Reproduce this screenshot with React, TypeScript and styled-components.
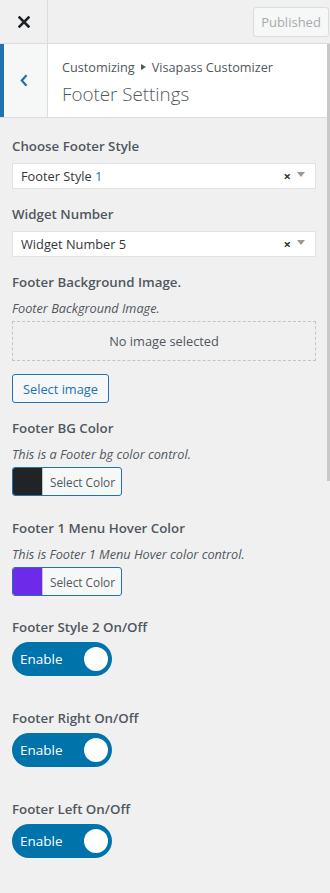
import React from "react";
import styled, { createGlobalStyle } from "styled-components";

const GlobalStyle = createGlobalStyle`
  html, body { margin: 0; padding: 0; background: #f0f0f1; }
  body { font-family: "Open Sans", "Noto Sans", sans-serif; color: #50575e; }
  * { box-sizing: border-box; }
`;

const Panel = styled.div`
  position: relative;
  width: 330px;
  height: 893px;
  overflow: hidden;
  background: #f0f0f1;
`;

const TopBar = styled.header`
  display: flex;
  align-items: center;
  height: 44px;
  border-bottom: 1px solid #dcdcde;
`;

const CloseButton = styled.div`
  width: 48px;
  height: 43px;
  border-right: 1px solid #dcdcde;
  display: flex;
  align-items: center;
  justify-content: center;
`;

const PublishedButton = styled.div`
  margin-left: auto;
  margin-right: 1px;
  width: 76px;
  height: 30px;
  border: 1px solid #dcdcde;
  border-radius: 3px;
  background: #f6f7f7;
  color: #a7aaad;
  font-size: 13px;
  display: flex;
  align-items: center;
  justify-content: center;
`;

const SectionHead = styled.div`
  display: flex;
  height: 74px;
  background: #fff;
  border-bottom: 1px solid #dcdcde;
`;

const BackButton = styled.div`
  width: 48px;
  background: #f6f7f7;
  border-left: 4px solid #2271b1;
  border-right: 1px solid #dcdcde;
  display: flex;
  align-items: center;
  justify-content: center;
  padding-right: 4px;
`;

const TitleBlock = styled.div`
  display: flex;
  flex-direction: column;
  padding: 13px 0 0 14px;
`;

const Breadcrumb = styled.div`
  font-size: 12.7px;
  line-height: 20px;
  color: #50575e;
  display: flex;
  align-items: center;
  gap: 6px;
`;

const Arrow = styled.span`
  display: inline-block;
  width: 0;
  height: 0;
  border-top: 3px solid transparent;
  border-bottom: 3px solid transparent;
  border-left: 5px solid #50575e;
`;

const Title = styled.div`
  font-size: 18.8px;
  font-weight: 300;
  line-height: 28px;
  margin-top: 3px;
  color: #50575e;
`;

const Content = styled.div`
  padding: 16px 14px 0 12px;
`;

const Control = styled.div<{ $gap: number }>`
  margin-bottom: ${(p) => p.$gap}px;
`;

const Label = styled.div`
  font-size: 13.3px;
  font-weight: 600;
  line-height: 24px;
  color: #50575e;
`;

const Description = styled.div`
  font-size: 12.7px;
  font-style: italic;
  line-height: 18px;
  margin: 5px 0 4px;
  color: #50575e;
`;

const Select = styled.div`
  margin-top: 5px;
  height: 26px;
  background: #fff;
  border: 1px solid #e2e2e2;
  display: flex;
  align-items: center;
  padding: 0 10px 0 8px;
  font-size: 12.8px;
  color: #32373c;
`;

const Blue = styled.span`
  color: #2271b1;
`;

const Clear = styled.span`
  margin-left: auto;
  font-size: 13px;
  font-weight: 700;
  color: #333;
  margin-right: 6px;
`;

const Caret = styled.span`
  width: 0;
  height: 0;
  border-left: 4px solid transparent;
  border-right: 4px solid transparent;
  border-top: 5px solid #999;
  margin-bottom: 3px;
`;

const Placeholder = styled.div`
  margin-top: 2px;
  height: 40px;
  border: 1px dashed #c3c4c7;
  display: flex;
  align-items: center;
  justify-content: center;
  font-size: 12.8px;
  color: #50575e;
`;

const SecondaryButton = styled.div`
  margin-top: 13px;
  display: inline-flex;
  align-items: center;
  height: 29px;
  padding: 0 10px;
  border: 1px solid #2271b1;
  border-radius: 3px;
  background: #f6f7f7;
  color: #2271b1;
  font-size: 12.8px;
`;

const ColorButton = styled.div`
  display: inline-flex;
  height: 29px;
  border: 1px solid #2271b1;
  border-radius: 3px;
  overflow: hidden;
  background: #f6f7f7;
  vertical-align: top;
`;

const Swatch = styled.span<{ $color: string }>`
  width: 30px;
  background: ${(p) => p.$color};
  border-right: 1px solid #c3c4c7;
`;

const ColorText = styled.span`
  display: flex;
  align-items: center;
  padding: 0 6px 0 7px;
  font-size: 11.8px;
  color: #50575e;
`;

const Toggle = styled.div`
  margin-top: 3px;
  width: 100px;
  height: 34px;
  border-radius: 17px;
  background: #0073aa;
  display: flex;
  align-items: center;
  padding: 0 4px 0 8px;
  color: #fff;
  font-size: 13.5px;
`;

const Knob = styled.span`
  margin-left: auto;
  width: 24px;
  height: 24px;
  border-radius: 50%;
  background: #fff;
`;

const ScrollThumb = styled.div`
  position: absolute;
  right: 0;
  top: 44px;
  width: 3px;
  height: 437px;
  background: #c8c8c8;
`;

const ToggleControl = ({ label }: { label: string }) => (
  <Control $gap={30}>
    <Label>{label}</Label>
    <Toggle>
      Enable
      <Knob />
    </Toggle>
  </Control>
);

export default function App() {
  return (
    <Panel>
      <GlobalStyle />
      <TopBar>
        <CloseButton>
          <svg width="12" height="12" viewBox="0 0 12 12">
            <path d="M1.5 1.5 L10.5 10.5 M10.5 1.5 L1.5 10.5" stroke="#1d2327" strokeWidth="2.6" strokeLinecap="square" />
          </svg>
        </CloseButton>
        <PublishedButton>Published</PublishedButton>
      </TopBar>
      <SectionHead>
        <BackButton>
          <svg width="8" height="13" viewBox="0 0 8 13">
            <path d="M6.5 1.2 L1.8 6.5 L6.5 11.8" fill="none" stroke="#2271b1" strokeWidth="2.2" />
          </svg>
        </BackButton>
        <TitleBlock>
          <Breadcrumb>
            Customizing <Arrow /> Visapass Customizer
          </Breadcrumb>
          <Title>Footer Settings</Title>
        </TitleBlock>
      </SectionHead>
      <Content>
        <Control $gap={13}>
          <Label>Choose Footer Style</Label>
          <Select>
            Footer Style&nbsp;<Blue>1</Blue>
            <Clear>×</Clear>
            <Caret />
          </Select>
        </Control>
        <Control $gap={13}>
          <Label>Widget Number</Label>
          <Select>
            Widget Number 5
            <Clear>×</Clear>
            <Caret />
          </Select>
        </Control>
        <Control $gap={13}>
          <Label>Footer Background Image.</Label>
          <Description>Footer Background Image.</Description>
          <Placeholder>No image selected</Placeholder>
          <SecondaryButton>Select image</SecondaryButton>
        </Control>
        <Control $gap={20}>
          <Label>Footer BG Color</Label>
          <Description>This is a Footer bg color control.</Description>
          <ColorButton>
            <Swatch $color="#222327" />
            <ColorText>Select Color</ColorText>
          </ColorButton>
        </Control>
        <Control $gap={19}>
          <Label>Footer 1 Menu Hover Color</Label>
          <Description>This is Footer 1 Menu Hover color control.</Description>
          <ColorButton>
            <Swatch $color="#6d2ae8" />
            <ColorText>Select Color</ColorText>
          </ColorButton>
        </Control>
        <ToggleControl label="Footer Style 2 On/Off" />
        <ToggleControl label="Footer Right On/Off" />
        <ToggleControl label="Footer Left On/Off" />
      </Content>
      <ScrollThumb />
    </Panel>
  );
}
